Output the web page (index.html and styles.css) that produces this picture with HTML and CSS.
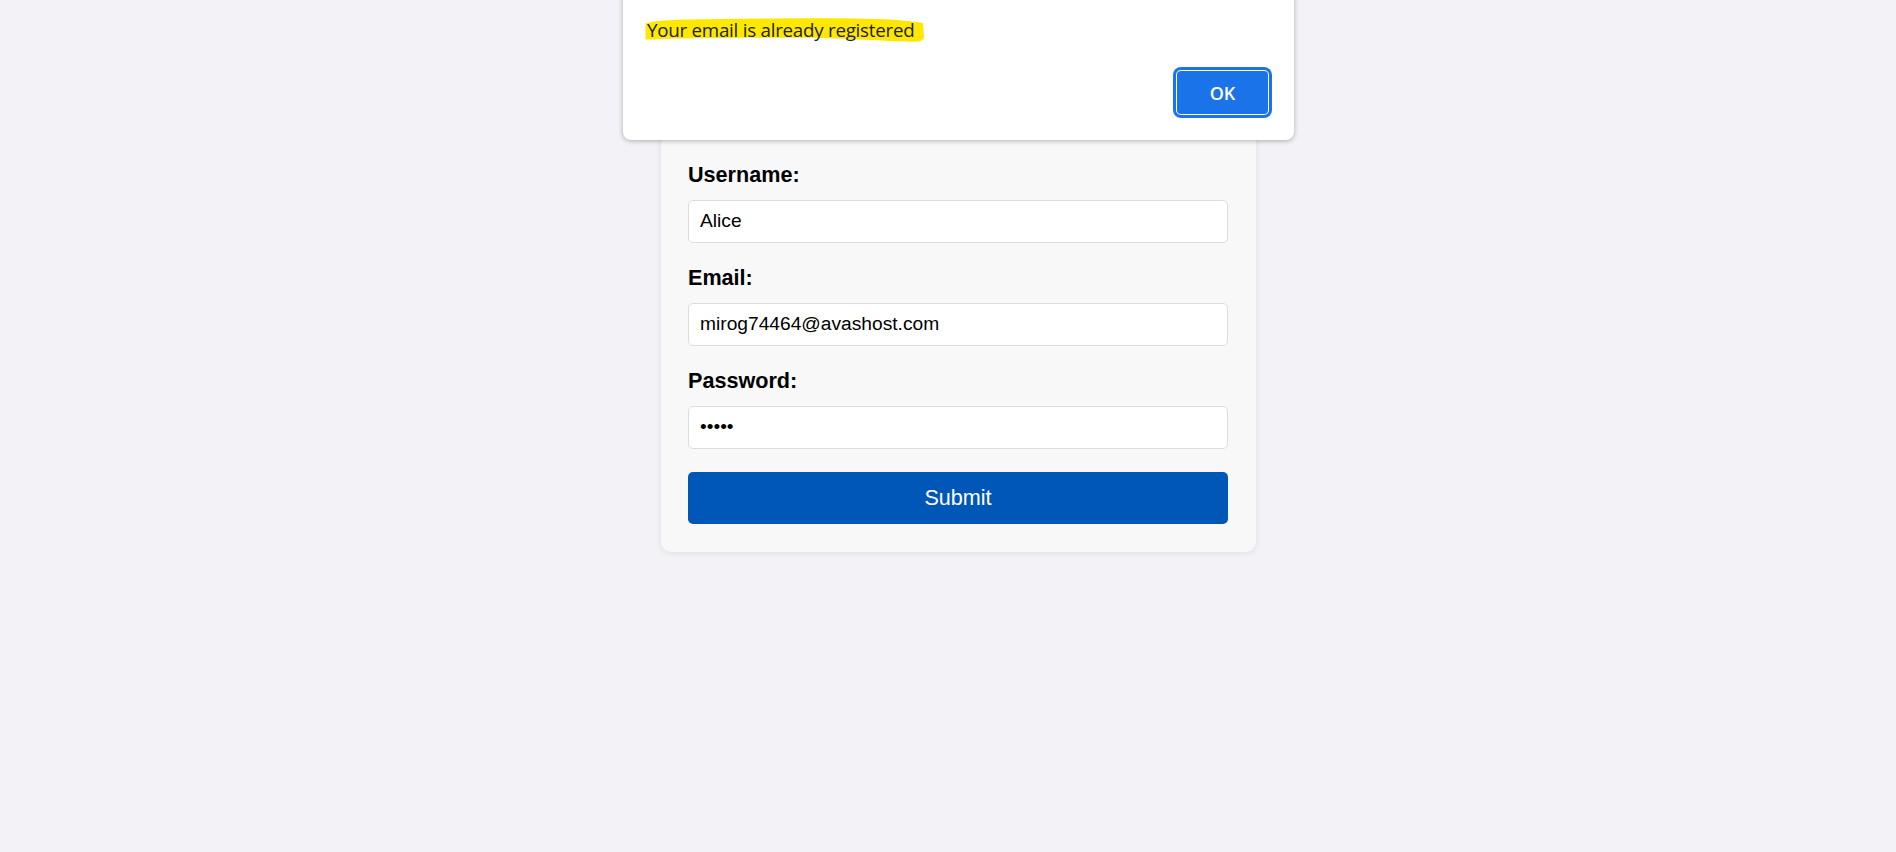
FILE: index.html
```html
<!DOCTYPE html>
<html lang="en">
<head>
<meta charset="utf-8">
<title>Register</title>
<link rel="stylesheet" href="styles.css">
</head>
<body>
<main class="page">
  <form class="card">
    <div class="field">
      <label class="label" for="username">Username:</label>
      <input class="input" id="username" type="text" value="Alice">
    </div>
    <div class="field">
      <label class="label" for="email">Email:</label>
      <input class="input" id="email" type="email" value="mirog74464@avashost.com">
    </div>
    <div class="field">
      <label class="label" for="password">Password:</label>
      <input class="input" id="password" type="password" value="12345">
    </div>
    <button class="submit" type="button">Submit</button>
  </form>
</main>

<div class="dialog" role="alertdialog">
  <p class="message">
    <span class="marked">
      <svg class="marker" width="280" height="25" viewBox="0 0 280 25" aria-hidden="true">
        <path d="M0.5 5.5 C 6 3.5, 18 2.4, 40 1.6 C 90 0.6, 150 0.2, 210 0.4 C 240 0.6, 262 2, 278 5 L 279 18 C 279.5 22.5, 276 24.2, 266 23.8 C 240 23, 200 20.5, 160 19.8 C 110 19.4, 60 19.8, 30 20.6 C 15 21.2, 5 22, 0.5 21.4 Z" fill="#ffe800"/>
      </svg>
      <span class="message-text">Your email is already registered</span>
    </span>
  </p>
  <div class="actions">
    <button class="ok" type="button">OK</button>
  </div>
</div>
</body>
</html>
```

FILE: styles.css
```css
* { box-sizing: border-box; }

html, body {
  margin: 0;
  padding: 0;
  background: #f3f3f7;
  font-family: "Liberation Sans", Arial, sans-serif;
}

.page {
  display: flex;
  justify-content: center;
  padding: 108px 0 0 20px;
  min-height: 852px;
}

.card {
  width: 595px;
  background: #f8f8f8;
  border-radius: 10px;
  box-shadow: 0 1px 6px rgba(0, 0, 0, 0.09);
  padding: 53.5px 27.5px 27.5px;
  display: flex;
  flex-direction: column;
  align-self: flex-start;
}

.field {
  display: flex;
  flex-direction: column;
  margin-bottom: 22px;
}

.field:last-of-type {
  margin-bottom: 23.5px;
}

.label {
  font-weight: 700;
  font-size: 21.6px;
  color: #000;
  margin-bottom: 12px;
}

.input {
  height: 43px;
  border: 1px solid #dcdcdc;
  border-radius: 5px;
  background: #fff;
  padding: 0 11px;
  font-family: "Liberation Sans", Arial, sans-serif;
  font-size: 19.2px;
  color: #000;
}

.submit {
  height: 52px;
  border: 0;
  border-radius: 5px;
  background: #0057b7;
  color: #fff;
  font-family: "Liberation Sans", Arial, sans-serif;
  font-size: 21.6px;
}

.dialog {
  position: absolute;
  left: 623px;
  top: -12px;
  width: 671px;
  height: 152px;
  background: #fff;
  border-radius: 8px;
  box-shadow: 0 1px 5px rgba(0, 0, 0, 0.3);
  padding: 30px 26px 26px 24px;
  display: flex;
  flex-direction: column;
}

.message {
  margin: 0;
  line-height: 24px;
  font-family: "Open Sans", "Noto Sans", sans-serif;
  font-size: 18.75px;
  letter-spacing: -0.25px;
  color: #202124;
}

.marked {
  position: relative;
  display: inline-block;
}

.marker {
  position: absolute;
  left: -2px;
  top: 0;
}

.message-text {
  position: relative;
}

.actions {
  margin-top: auto;
  display: flex;
  justify-content: flex-end;
}

.ok {
  width: 91px;
  height: 43px;
  border: 0;
  border-radius: 4px;
  background: #1a73e8;
  color: #fff;
  font-family: "Open Sans", "Noto Sans", sans-serif;
  font-weight: 600;
  font-size: 18px;
  box-shadow: 0 0 0 1px #fff, 0 0 0 4px #1a73e8;
}
```
